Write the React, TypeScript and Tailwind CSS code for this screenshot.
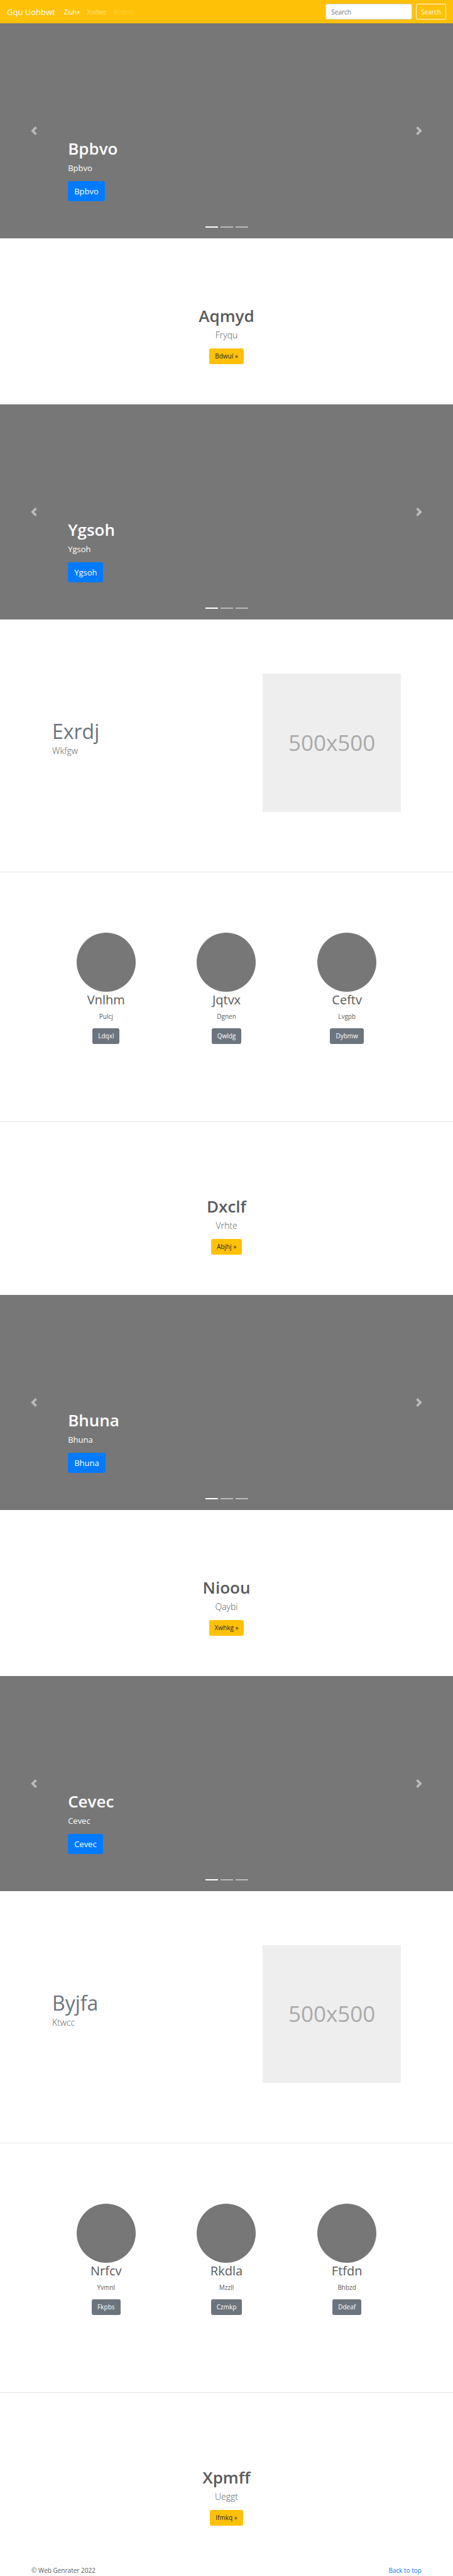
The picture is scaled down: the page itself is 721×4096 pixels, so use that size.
import type { ReactNode } from "react";

function Chevron({ direction }: { direction: "left" | "right" }) {
  const d =
    direction === "left"
      ? "M5.25 0l-4 4 4 4 1.5-1.5-2.5-2.5 2.5-2.5-1.5-1.5z"
      : "M2.75 0l-1.5 1.5 2.5 2.5-2.5 2.5 1.5 1.5 4-4-4-4z";
  return (
    <svg viewBox="0 0 8 8" className="size-[14px] fill-white" aria-hidden="true">
      <path d={d} />
    </svg>
  );
}

function Navbar() {
  return (
    <nav className="flex h-[37px] items-center bg-[#ffc107] px-[11px] text-[10px] leading-4 text-white">
      <a href="#" className="mr-[14px] text-[13px] leading-5">
        Gqu Uohbwt
      </a>
      <div className="flex grow items-center gap-[11px]">
        <a href="#" className="text-white">
          Ziuhx
        </a>
        <a href="#" className="text-white/50">
          Xodwe
        </a>
        <a href="#" className="text-white/25">
          Kczmm
        </a>
      </div>
      <form className="flex items-center gap-[6px]" onSubmit={(e) => e.preventDefault()}>
        <input
          type="text"
          placeholder="Search"
          aria-label="Search"
          className="h-[25px] w-[138px] rounded-[3px] border border-[#ced4da] bg-white px-[8px] text-[#495057] placeholder:text-[#6c757d]"
        />
        <button type="submit" className="h-[25px] rounded-[3px] border border-[#f8f9fa] px-[7px] text-[#f8f9fa]">
          Search
        </button>
      </form>
    </nav>
  );
}

function Carousel({ label }: { label: string }) {
  return (
    <section className="relative flex h-[342px] flex-col justify-end bg-[#777] px-[15%] pb-[59px] text-white">
      <h1 className="mb-[5px] text-[26px] leading-8 font-semibold">{label}</h1>
      <p className="mb-[11px] text-[13px] leading-5">{label}</p>
      <div>
        <a href="#" className="inline-block rounded-[3px] bg-[#007bff] px-[10px] py-[6px] text-[13px] leading-5">
          {label}
        </a>
      </div>
      <button
        type="button"
        aria-label="Previous"
        className="absolute inset-y-0 left-0 flex w-[15%] items-center justify-center opacity-50"
      >
        <Chevron direction="left" />
      </button>
      <button
        type="button"
        aria-label="Next"
        className="absolute inset-y-0 right-0 flex w-[15%] items-center justify-center opacity-50"
      >
        <Chevron direction="right" />
      </button>
      <div className="absolute inset-x-0 bottom-[17px] flex justify-center gap-[4px]">
        <span className="h-[2px] w-[20px] bg-white" />
        <span className="h-[2px] w-[20px] bg-white/50" />
        <span className="h-[2px] w-[20px] bg-white/50" />
      </div>
    </section>
  );
}

function Callout({ title, text, action }: { title: string; text: string; action: string }) {
  return (
    <section className="pt-[107px] pb-[64px] text-center">
      <h1 className="mb-[5px] text-[26px] leading-8 font-semibold">{title}</h1>
      <p className="mb-[11px] text-[14px] leading-5 font-light">{text}</p>
      <a
        href="#"
        className="mx-auto block w-fit rounded-[3px] bg-[#ffc107] px-[9px] py-[5px] text-[10px] leading-[15px] text-[#212529]"
      >
        {action} »
      </a>
    </section>
  );
}

function Container({ children }: { children: ReactNode }) {
  return <div className="mx-auto w-full max-w-[641px] px-[33px]">{children}</div>;
}

function Divider() {
  return <hr className="border-t border-black/10" />;
}

function Featurette({ title, text }: { title: string; text: string }) {
  return (
    <section className="pt-[86px] pb-[95px]">
      <Container>
        <div className="flex">
          <div className="w-7/12 px-[10px] pt-[75px]">
            <h2 className="mb-[5px] text-[32px] leading-[33px] text-[#6c757d]">{title}</h2>
            <p className="text-[14px] leading-5 font-light">{text}</p>
          </div>
          <div className="w-5/12 px-[10px]">
            <div className="flex aspect-square items-center justify-center bg-[#eee] text-[35px] text-[#aaa]">
              500x500
            </div>
          </div>
        </div>
      </Container>
    </section>
  );
}

type Item = { title: string; text: string; action: string };

function Trio({ items }: { items: Item[] }) {
  return (
    <section className="pt-[96px] pb-[123px]">
      <Container>
        <div className="grid grid-cols-3">
          {items.map((item) => (
            <div key={item.title} className="flex flex-col items-center">
              <div className="size-[94px] rounded-full bg-[#777]" />
              <h2 className="mb-[5px] text-[20px] leading-[26px]">{item.title}</h2>
              <p className="mb-[11px] text-[10px] leading-4">{item.text}</p>
              <a
                href="#"
                className="rounded-[3px] bg-[#6c757d] px-[9px] py-[5px] text-[10px] leading-[15px] text-white"
              >
                {item.action}
              </a>
            </div>
          ))}
        </div>
      </Container>
    </section>
  );
}

const firstTrio: Item[] = [
  { title: "Vnlhm", text: "Pulcj", action: "Ldqxl" },
  { title: "Jqtvx", text: "Dgnen", action: "Qwldg" },
  { title: "Ceftv", text: "Lvgpb", action: "Dybmw" },
];

const secondTrio: Item[] = [
  { title: "Nrfcv", text: "Yvmnl", action: "Fkpbs" },
  { title: "Rkdla", text: "Mzzll", action: "Czmkp" },
  { title: "Ftfdn", text: "Bhbzd", action: "Ddeaf" },
];

export default function App() {
  return (
    <div className="bg-white font-['Open_Sans','Noto_Sans',sans-serif] text-[#5a5a5a]">
      <Navbar />
      <main>
        <Carousel label="Bpbvo" />
        <Callout title="Aqmyd" text="Fryqu" action="Bdwul" />
        <Carousel label="Ygsoh" />
        <Featurette title="Exrdj" text="Wkfgw" />
        <Divider />
        <Trio items={firstTrio} />
        <Divider />
        <div className="pt-[11px]">
          <Callout title="Dxclf" text="Vrhte" action="Abjhj" />
        </div>
        <Carousel label="Bhuna" />
        <Callout title="Nioou" text="Qaybi" action="Xwhkg" />
        <Carousel label="Cevec" />
        <Featurette title="Byjfa" text="Ktwcc" />
        <Divider />
        <Trio items={secondTrio} />
        <Divider />
        <div className="pt-[11px]">
          <Callout title="Xpmff" text="Ueggt" action="Ifmkq" />
        </div>
      </main>
      <footer className="mx-auto flex w-full max-w-[641px] justify-between px-[10px] text-[10px] leading-[15px]">
        <p>© Web Genrater 2022</p>
        <a href="#" className="text-[#007bff]">
          Back to top
        </a>
      </footer>
    </div>
  );
}
